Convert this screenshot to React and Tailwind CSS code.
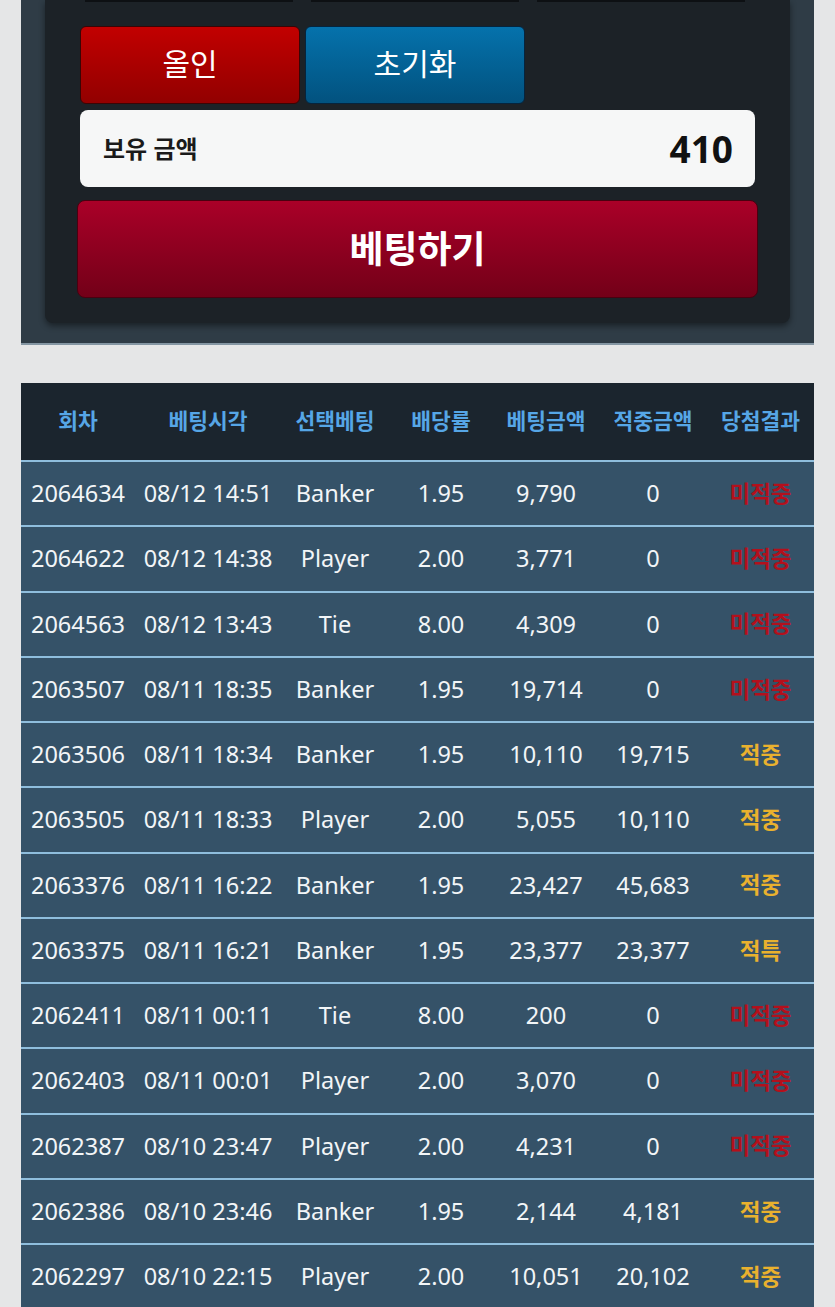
const rows = [
  ['2064634', '08/12 14:51', 'Banker', '1.95', '9,790', '0', '미적중'],
  ['2064622', '08/12 14:38', 'Player', '2.00', '3,771', '0', '미적중'],
  ['2064563', '08/12 13:43', 'Tie', '8.00', '4,309', '0', '미적중'],
  ['2063507', '08/11 18:35', 'Banker', '1.95', '19,714', '0', '미적중'],
  ['2063506', '08/11 18:34', 'Banker', '1.95', '10,110', '19,715', '적중'],
  ['2063505', '08/11 18:33', 'Player', '2.00', '5,055', '10,110', '적중'],
  ['2063376', '08/11 16:22', 'Banker', '1.95', '23,427', '45,683', '적중'],
  ['2063375', '08/11 16:21', 'Banker', '1.95', '23,377', '23,377', '적특'],
  ['2062411', '08/11 00:11', 'Tie', '8.00', '200', '0', '미적중'],
  ['2062403', '08/11 00:01', 'Player', '2.00', '3,070', '0', '미적중'],
  ['2062387', '08/10 23:47', 'Player', '2.00', '4,231', '0', '미적중'],
  ['2062386', '08/10 23:46', 'Banker', '1.95', '2,144', '4,181', '적중'],
  ['2062297', '08/10 22:15', 'Player', '2.00', '10,051', '20,102', '적중'],
];

const heads = ['회차', '베팅시각', '선택베팅', '배당률', '베팅금액', '적중금액', '당첨결과'];

const cols = 'grid grid-cols-[114px_146px_108px_104px_106px_108px_107px]';

export default function App() {
  return (
    <div
      className="min-h-[1307px] bg-[#e5e6e7] overflow-hidden"
      style={{ fontFamily: '"Noto Sans", "Noto Sans CJK KR", sans-serif' }}
    >
      {/* bet panel */}
      <div className="mx-[21px] bg-[#2f3c46] border-b-2 border-[#8496a3] pb-[20px]">
        <div className="mx-[24px] bg-[#1c2227] rounded-b-lg shadow-[0_3px_6px_rgba(0,0,0,0.45)] px-[32px] pb-[25px]">
          <div className="flex gap-[18px] px-[8px]">
            <div className="w-[208px] h-[2px] bg-[#0d1013]" />
            <div className="w-[208px] h-[2px] bg-[#0d1013]" />
            <div className="w-[208px] h-[2px] bg-[#0d1013]" />
          </div>
          <div className="flex gap-[5px] mt-[24px] px-[3px]">
            <button className="w-[220px] h-[78px] rounded-md border border-[#3a0505] bg-gradient-to-b from-[#c20000] to-[#920000] text-white text-[30px] pb-[4px]">
              올인
            </button>
            <button className="w-[220px] h-[78px] rounded-md border border-[#06243d] bg-gradient-to-b from-[#0572ac] to-[#02527f] text-white text-[30px] pb-[4px]">
              초기화
            </button>
          </div>
          <div className="mx-[3px] mt-[6px] h-[77px] rounded-lg bg-[#f6f7f7] flex items-center justify-between pl-[23px] pr-[22px]">
            <span className="text-[24px] font-bold text-[#1a1a1a]">보유 금액</span>
            <span className="text-[37px] font-bold text-[#111]">410</span>
          </div>
          <button className="mt-[13px] w-full h-[98px] rounded-lg border border-[#4a0010] bg-gradient-to-b from-[#aa0028] to-[#730018] text-white text-[37px] font-bold">
            베팅하기
          </button>
        </div>
      </div>

      {/* history table */}
      <div className="mx-[21px] mt-[38px] text-center">
        <div className={`${cols} h-[77px] bg-[#1b252e] items-center text-[21.5px] font-bold text-[#56a6e6]`}>
          {heads.map((h) => (
            <div key={h} className="whitespace-nowrap">{h}</div>
          ))}
        </div>
        {rows.map((r) => (
          <div
            key={r[0]}
            className={`${cols} h-[65.25px] bg-[#355268] border-t-2 border-[#8fbedd] items-center text-[23.5px] text-[#f2f5f7]`}
          >
            {r.slice(0, 6).map((c, i) => (
              <div key={i} className="whitespace-nowrap">{c}</div>
            ))}
            <div className={r[6] === '미적중' ? 'text-[#b3101c] font-bold text-[22.5px]' : 'text-[#e9b12e] font-bold text-[22.5px]'}>
              {r[6]}
            </div>
          </div>
        ))}
      </div>
    </div>
  );
}
